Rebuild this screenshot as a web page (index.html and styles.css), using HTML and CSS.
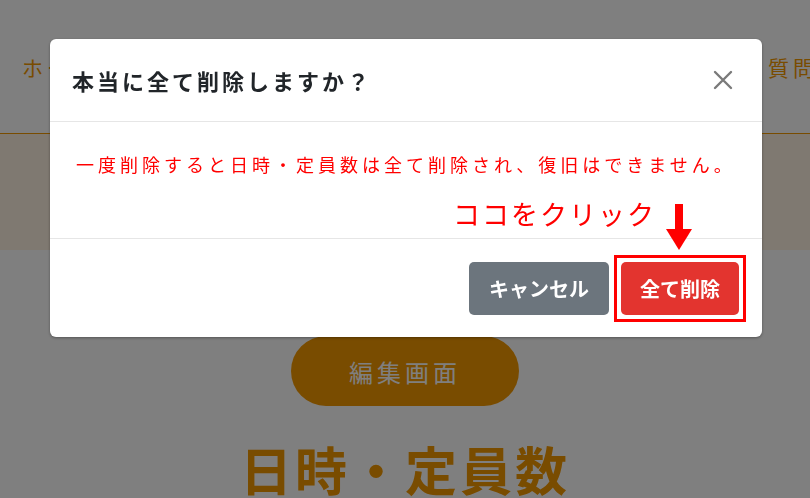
FILE: index.html
```html
<!DOCTYPE html>
<html lang="ja">
<head>
  <meta charset="UTF-8">
  <meta name="viewport" content="width=device-width, initial-scale=1.0">
  <title>日時・定員数</title>
  <link rel="stylesheet" href="styles.css">
</head>
<body>

  <header class="site-header">
    <a class="nav-link">ホーム</a>
    <a class="nav-link nav-right">よくある質問</a>
  </header>

  <div class="band"></div>

  <main class="content">
    <button class="edit-btn">編集画面</button>
    <h1 class="page-title">日時・定員数</h1>
  </main>

  <!-- delete confirm modal -->
  <div class="backdrop">
    <div class="modal">
      <div class="modal-header">
        <h2 class="modal-title">本当に全て削除しますか？</h2>
        <button class="close-btn" aria-label="閉じる">
          <svg width="20" height="20" viewBox="0 0 20 20">
            <path d="M2 2 L18 18 M18 2 L2 18" stroke="#7a7a7a" stroke-width="2.4" stroke-linecap="round"/>
          </svg>
        </button>
      </div>
      <div class="modal-body">
        <p class="warning">一度削除すると日時・定員数は全て削除され、復旧はできません。</p>
        <div class="note">
          <span class="note-text">ココをクリック</span>
          <svg class="note-arrow" width="26" height="46" viewBox="0 0 26 46">
            <rect x="9" y="0" width="8" height="26" fill="#f00"/>
            <polygon points="0,25 26,25 13,46" fill="#f00"/>
          </svg>
        </div>
      </div>
      <div class="modal-footer">
        <button class="btn btn-cancel">キャンセル</button>
        <div class="highlight">
          <button class="btn btn-delete">全て削除</button>
        </div>
      </div>
    </div>
  </div>

</body>
</html>
```

FILE: styles.css
```css
body {
  font-family: "Noto Sans CJK JP", "Noto Sans", sans-serif;
  margin: 0;
  padding: 0;
  background-color: #fff;
  overflow: hidden;
}

/* page under the modal */
.site-header {
  height: 133px;
  border-bottom: 1px solid #f39800;
  display: flex;
  align-items: center;
  justify-content: space-between;
  padding: 0 0 0 22px;
}

.nav-link {
  color: #f39800;
  font-size: 21px;
  letter-spacing: 4px;
}

.nav-right {
  margin-right: -8px;
}

.band {
  height: 116px;
  background-color: #fff2e2;
}

.content {
  padding-top: 86px;
  text-align: center;
}

.edit-btn {
  display: block;
  margin: 0 auto;
  width: 228px;
  height: 70px;
  border: none;
  border-radius: 35px;
  background-color: #f39800;
  color: #fff;
  font-family: inherit;
  font-size: 24px;
  letter-spacing: 4px;
}

.page-title {
  margin: 32px 0 0;
  color: #f39800;
  font-size: 52px;
  line-height: 1.2;
  letter-spacing: 3px;
  font-weight: bold;
}

/* modal */
.backdrop {
  position: fixed;
  top: 0;
  left: 0;
  right: 0;
  bottom: 0;
  background-color: rgba(0, 0, 0, 0.5);
}

.modal {
  width: 712px;
  margin: 39px 0 0 50px;
  background-color: #fff;
  border-radius: 6px;
  box-shadow: 0 1px 3px rgba(0, 0, 0, 0.35);
}

.modal-header {
  height: 82px;
  border-bottom: 1px solid #e6e6e6;
  display: flex;
  align-items: center;
  justify-content: space-between;
  padding: 0 29px 0 22px;
}

.modal-title {
  margin: 0;
  font-size: 22px;
  line-height: 1.5;
  letter-spacing: 3px;
  font-weight: bold;
  color: #212529;
}

.close-btn {
  border: none;
  background: none;
  padding: 0;
  width: 20px;
  height: 20px;
  display: flex;
}

.modal-body {
  padding: 29px 16px 0 26px;
}

.warning {
  margin: 0;
  color: #f00;
  font-size: 18px;
  line-height: 27px;
  letter-spacing: 4px;
  white-space: nowrap;
}

.note {
  margin: 21px 54px 0 0;
  display: flex;
  justify-content: flex-end;
  align-items: flex-start;
  gap: 10px;
}

.note-text {
  color: #f00;
  font-size: 27px;
  line-height: 30px;
  letter-spacing: 2px;
}

.note-arrow {
  display: block;
  margin-top: 5px;
  margin-bottom: -12px;
}

.modal-footer {
  border-top: 1px solid #e6e6e6;
  padding: 16px 16px 15px;
  display: flex;
  justify-content: flex-end;
  align-items: center;
  gap: 5px;
}

.btn {
  height: 53px;
  padding: 0 19px;
  border: none;
  border-radius: 5px;
  color: #fff;
  font-family: inherit;
  font-size: 20px;
  font-weight: bold;
  cursor: pointer;
}

.btn-cancel {
  background-color: #6c757d;
  padding: 0 20px;
}

.btn-delete {
  background-color: #e3342f;
}

.highlight {
  border: 3px solid #f00;
  padding: 4px;
  display: flex;
}
```
